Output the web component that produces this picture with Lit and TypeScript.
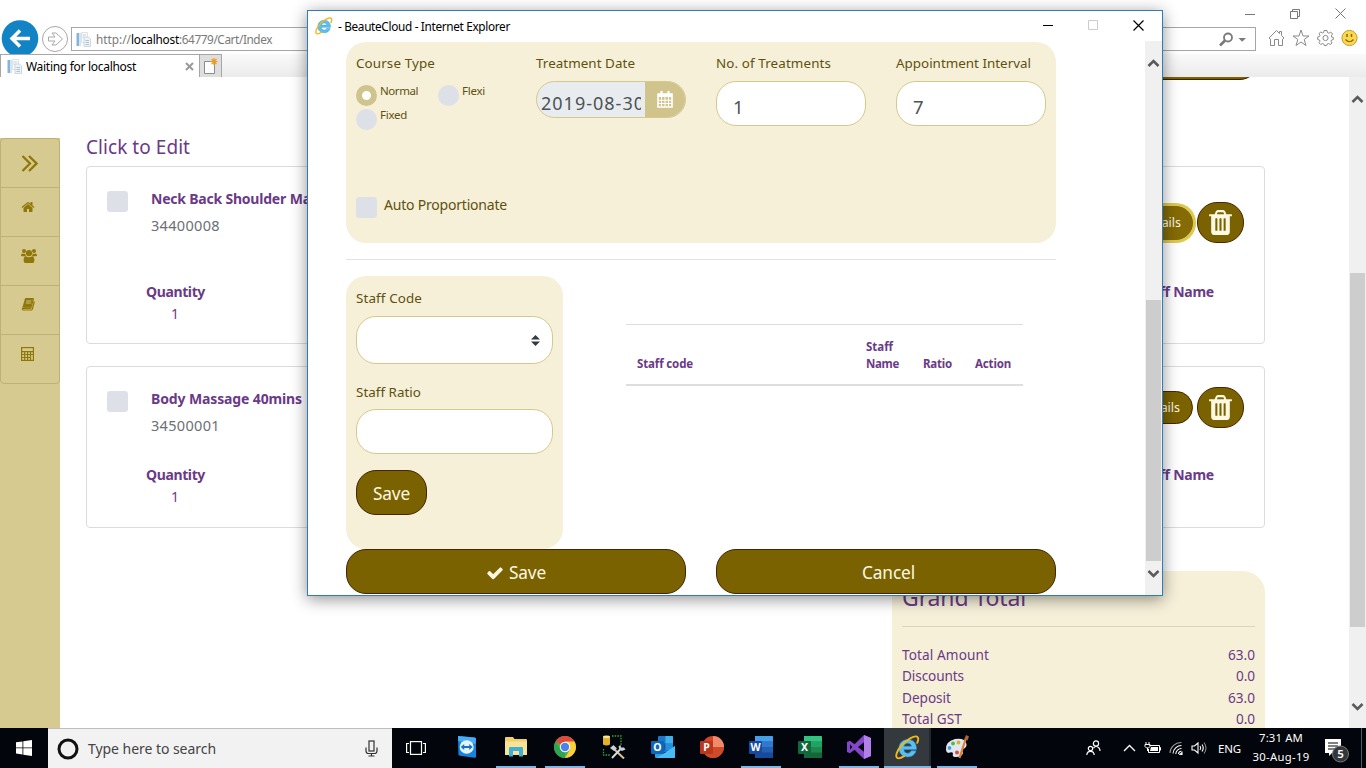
import { LitElement, html, css, svg } from "lit";
import { customElement, property } from "lit/decorators.js";
import { classMap } from "lit/directives/class-map.js";

/** A single line of text whose tracking is tuned so that it spans `w` pixels. */
@customElement("fit-text")
class FitText extends LitElement {
  @property({ type: Number }) w = 0;
  @property() text = "";
  static styles = css`
    :host { display: inline-block; white-space: pre; text-align: left; }
  `;
  updated() {
    const span = this.renderRoot.querySelector("span") as HTMLElement;
    span.style.letterSpacing = "0px";
    const natural = span.getBoundingClientRect().width;
    const gap = (this.w - natural) / Math.max(1, this.text.length);
    span.style.letterSpacing = `${gap.toFixed(3)}px`;
  }
  render() {
    return html`<span>${this.text}</span>`;
  }
}

const fit = (text: string, w: number) => html`<fit-text .text=${text} .w=${w}></fit-text>`;

const fa = (d: string, size: number) =>
  html`<svg width=${size} height=${size} viewBox="0 0 1792 1792" fill="currentColor"><path d=${d} /></svg>`;

const TRASH =
  "M704 1376v-704q0-14-9-23t-23-9h-64q-14 0-23 9t-9 23v704q0 14 9 23t23 9h64q14 0 23-9t9-23zm256 0v-704q0-14-9-23t-23-9h-64q-14 0-23 9t-9 23v704q0 14 9 23t23 9h64q14 0 23-9t9-23zm256 0v-704q0-14-9-23t-23-9h-64q-14 0-23 9t-9 23v704q0 14 9 23t23 9h64q14 0 23-9t9-23zm-544-992h448l-48-117q-7-9-17-11h-317q-10 2-17 11zm928 32v64q0 14-9 23t-23 9h-96v948q0 83-47 143.5t-113 60.5h-832q-66 0-113-58.5t-47-141.5v-952h-96q-14 0-23-9t-9-23v-64q0-14 9-23t23-9h309l70-167q15-37 54-63t79-26h320q40 0 79 26t54 63l70 167h309q14 0 23 9t9 23z";
const CHECK =
  "M1671 566q0 40-28 68l-724 724-136 136q-28 28-68 28t-68-28l-136-136-362-362q-28-28-28-68t28-68l136-136q28-28 68-28t68 28l294 295 656-657q28-28 68-28t68 28l136 136q28 28 28 68z";
const HOME =
  "M1472 992v480q0 26-19 45t-45 19h-384v-384h-256v384h-384q-26 0-45-19t-19-45v-480q0-1 .5-3t.5-3l575-474 575 474q1 2 1 6zm223-69l-62 74q-8 9-21 11h-3q-13 0-21-7l-692-577-692 577q-12 8-24 7-13-2-21-11l-62-74q-8-10-7-23.5t11-21.5l719-599q32-26 76-26t76 26l244 204v-195q0-14 9-23t23-9h192q14 0 23 9t9 23v408l219 182q10 8 11 21.5t-7 23.5z";

const ieLogo = (size: number) => html`
  <svg width=${size} height=${size} viewBox="0 0 24 24" fill="none">
    <path d="M20.2 15.2H15.6C15 16.7 13.8 17.4 12.2 17.4C10 17.4 8.6 16 8.5 13.8H20.6C21 8.3 17.6 4.3 12.4 4.3C7.4 4.3 3.8 7.9 3.8 12.7C3.8 17.6 7.3 21 12.3 21C16.300 21 19.2 18.900 20.200 15.200ZM8.600 10.800C8.900 9 10.300 7.900 12.200 7.900C14.200 7.900 15.600 9 15.800 10.800Z" fill="#5cc0ee" stroke="#2f90cf" stroke-width=".6"/>
    <path d="M21.300 7.500C22.700 4.500 22.700 2.300 21.100 1.600C18.300.4 11.500 4.300 6.500 9.800C1.900 14.900 0 20.200 2 21.900C3.300 23 5.800 22.200 8.700 20.300" stroke="#f0b81c" stroke-width="1.800" stroke-linecap="round"/>
  </svg>`;

const pageIcon = html`
  <svg width="15" height="15" viewBox="0 0 15 15">
    <path d="M.5 1H3V14H.5Z" fill="#86b3d8"/><path d="M3 1H5V14H3Z" fill="#d5e5f2"/>
    <path d="M5.500.5H11.500V10.500H5.500Z" fill="#f8fafc" stroke="#dde3e8"/>
    <path d="M6.500 3H10M6.500 5H8" stroke="#c5d3de"/>
    <path d="M8 5H12.500L14.500 7V14.500H8Z" fill="#eef3f8" stroke="#c3cfd9" stroke-width=".8"/>
    <path d="M9.500 8.500H13M9.500 10.500H13M9.500 12.500H13" stroke="#a9bccb" stroke-width=".9"/>
  </svg>`;

const chevron = (up: boolean) => html`
  <svg width="13" height="10" viewBox="0 0 13 10">
    <path d=${up ? "M1.500 8L6.500 3L11.500 8" : "M1.500 2L6.500 7L11.500 2"} fill="none" stroke="#5a5a5a" stroke-width="2.600"/>
  </svg>`;

const sideIcons = [
  html`<svg width="17" height="17" viewBox="0 0 17 17" fill="none" stroke="currentColor" stroke-width="2.300"><path d="M1.500 1L9 8.500L1.500 16M8 1L15.500 8.500L8 16"/></svg>`,
  fa(HOME, 14),
  html`<svg width="16" height="14" viewBox="0 0 16 14" fill="currentColor">
    <circle cx="3" cy="2.100" r="2"/><circle cx="13" cy="2.100" r="2"/><circle cx="8" cy="4.200" r="3.100"/>
    <path d="M0 6.500Q0 4.600 1.500 4.500Q3 5.200 4.300 4.600Q4.300 6.500 5.300 7.200H1.500Q0 7.300 0 6.500ZM16 6.500Q16 4.600 14.500 4.500Q13 5.200 11.700 4.600Q11.700 6.500 10.700 7.200H14.500Q16 7.300 16 6.500Z"/>
    <path d="M2.600 11.500Q2.600 7.500 4.900 7.300Q8 9.400 11.100 7.300Q13.400 7.500 13.400 11.500Q13.400 14 11.500 14H4.500Q2.600 14 2.600 11.500Z"/></svg>`,
  html`<svg width="14" height="13" viewBox="0 0 14 13"><path d="M4.300.5H11.800Q12.600.6 12.300 1.500L10 9.500Q9.700 10.300 8.800 10.300H2.300Q1 10.400 1.500 11.400Q1.700 12 2.500 12H10Q10.900 12 11.200 11.200L13.400 3.500" fill="none" stroke="currentColor" stroke-width="1.200"/><path d="M4 .5H12L9.500 9.700H1.300Z" fill="currentColor"/><path d="M5.300 3H10.300M4.800 5H9.800" stroke="#d6ca91" stroke-width=".9"/></svg>`,
  html`<svg width="13" height="14" viewBox="0 0 13 14"><rect x=".6" y=".6" width="11.800" height="12.800" fill="none" stroke="currentColor" stroke-width="1.200"/><path d="M0 4.600H13M1 7.500H12M1 10.500H9M3.700 4.600V13M6.600 4.600V13M9.500 4.600V13" stroke="currentColor" stroke-width="1.200"/></svg>`,
];

const office = (letter: string, dark: string, mid: string, light: string, pale: string, round = false) => html`
  <svg width="24" height="24" viewBox="0 0 24 24">
    ${round
      ? svg`<circle cx="13" cy="12" r="11" fill=${mid}/><path d="M13 1A11 11 0 0 1 24 12H13Z" fill=${pale}/><path d="M24 12A11 11 0 0 1 2 12Z" fill=${light}/>`
      : svg`<rect x="6" y="1" width="18" height="22" rx="1.200" fill=${mid}/><path d="M6 1H23Q24 1 24 2V6.500H6Z" fill=${pale}/><path d="M6 6.500H24V12H6Z" fill=${light}/><path d="M6 17.500H24V22Q24 23 23 23H6Z" fill=${dark}/>`}
    <rect x="0" y="6" width="13" height="13" rx="1" fill=${dark}/>
    <text x="6.500" y="16.300" text-anchor="middle" font-family="Noto Sans, sans-serif" font-weight="700" font-size="10.500" fill="#fff">${letter}</text>
  </svg>`;

type Task = { icon: unknown; open?: boolean; active?: boolean };
const tasks: Task[] = [
  { icon: html`<svg width="20" height="24" viewBox="0 0 20 24"><path d="M1 1L17.500 2.500Q19 2.700 19 4V21.500Q19 23 17.500 22.800L3 20.800Q1.500 20.500 1.400 19Z" fill="#1583e0"/><path d="M1 1L17.500 2.500Q19 2.700 19 4L18.500 9L1.200 6Z" fill="#48adf5"/><ellipse cx="9.700" cy="12" rx="7" ry="6.800" fill="#e8f4fd"/><path d="M3.700 12L7.200 8.900V11H12.200V8.900L15.700 12L12.200 15.100V13H7.200V15.100Z" fill="#1272c9"/></svg>` },
  { icon: html`<svg width="22" height="20" viewBox="0 0 22 20"><path d="M0 1Q0 0 1 0H8L9.500 2H21Q22 2 22 3V18H0Z" fill="#f2cf6d"/><path d="M0 4.500H22V18H0Z" fill="#fbe395"/><path d="M4 11Q4 10 5 10H17Q18 10 18 11V19.500H14V14H8V19.500H4Z" fill="#3fb0d3"/></svg>`, open: true },
  { icon: html`<svg width="22" height="22" viewBox="0 0 22 22"><circle cx="11" cy="11" r="11" fill="#4caf50"/><path d="M11 11L1.500 5.500A11 11 0 0 1 20.500 5.500Z" fill="#dd4b3e"/><path d="M11 5.500H20.500A11 11 0 0 1 11 22L15.800 13.800Z" fill="#fdd037"/><path d="M1.500 5.500L6.200 13.700L11 16L10.500 22A11 11 0 0 1 1.500 5.500Z" fill="#2fa254"/><circle cx="11" cy="11" r="5.200" fill="#fff"/><circle cx="11" cy="11" r="4.200" fill="#4a83ec"/></svg>`, open: true },
  { icon: html`<svg width="24" height="24" viewBox="0 0 24 24"><path d="M1 1.500V9.500Q4.500 11.500 8 9.500V1.500Z" fill="#e2b227"/><ellipse cx="4.500" cy="1.700" rx="3.500" ry="1.300" fill="#fae890"/><path d="M10 1H19V10M1.500 14V20H9" fill="none" stroke="#36a63c" stroke-width="1.300" stroke-dasharray="1.500 1.200"/><path d="M12.500 14.500L22 23.500" stroke="#d9c58e" stroke-width="2"/><path d="M18.500 14L10 23" stroke="#d8dde2" stroke-width="1.900"/><path d="M8 13L11.500 10L15 13.500L12 16ZM16.500 11.500L18.500 10L19 12.500L22 12.500L23.500 14.500L20 16L17.500 14.500Z" fill="#c8d0d8"/></svg>` },
  { icon: html`<svg width="24" height="24" viewBox="0 0 24 24"><rect x="7" y="1" width="15" height="16" rx="1" fill="#1a76c9"/><path d="M14.500 1H21Q22 1 22 2V8.500H14.500Z" fill="#41b1ee"/><path d="M7 8.500H14.500V15H7Z" fill="#0f5ba5"/><path d="M14.500 8.500H22V15H14.500Z" fill="#2490dc"/><path d="M4 12L14 18L24 11V22Q24 23 23 23H5Q4 23 4 22Z" fill="#2aa0e6"/><path d="M24 11L13 18.500L5 23H23Q24 23 24 22Z" fill="#48bdf3"/><rect y="6" width="13" height="13" rx="1" fill="#0e66b7"/><text x="6.500" y="16.300" text-anchor="middle" font-family="Noto Sans, sans-serif" font-weight="700" font-size="10.500" fill="#fff">O</text></svg>` },
  { icon: office("P", "#b9371c", "#d24625", "#cf4a29", "#f18a6a", true) },
  { icon: office("W", "#184a9c", "#2160b4", "#2f7ad0", "#44a0e8"), open: true },
  { icon: office("X", "#12683a", "#1c8a4e", "#21a366", "#32c380") },
  { icon: html`<svg width="24" height="24" viewBox="0 0 24 24"><path fill-rule="evenodd" d="M17 0L7.500 9.300L3 5.800L0 7V17L3 18.200L7.500 14.700L17 24L24 21V3ZM3 9.300L5.300 12L3 14.700ZM17 7.200V16.800L11 12Z" fill="#8447cb"/><path d="M17 0L24 3V21L17 24Z" fill="#b37fe8"/></svg>`, open: true },
  { icon: ieLogo(25), open: true, active: true },
  { icon: html`<svg width="24" height="24" viewBox="0 0 24 24"><path d="M1 15Q0 6.500 10 4Q20 2.500 21.500 9Q22 12.500 18 14Q16.500 15.500 18 18Q17 22.500 9.500 22Q7 21.500 8 18.500Q7.500 16.500 5 17.500Q1.500 19 1 15Z" fill="#dfe8f0"/><circle cx="4.500" cy="13" r="1.900" fill="#4a9ae2"/><circle cx="8" cy="8.500" r="1.900" fill="#53b949"/><circle cx="13.500" cy="7.500" r="1.900" fill="#e6a92b"/><circle cx="12" cy="17.500" r="2" fill="#d94d3f"/><path d="M21 3L14.500 23" stroke="#d98234" stroke-width="2.200"/><path d="M19.500 4L21 0L24 1.500L22.500 5.500Z" fill="#a9663a"/></svg>`, open: true },
];

@customElement("scroll-bar")
class ScrollBar extends LitElement {
  @property({ type: Number }) start = 0;
  @property({ type: Number }) size = 0;
  static styles = css`
    :host { display: flex; flex-direction: column; width: 17px; flex: none; background: #f0f0f0; align-items: center; box-sizing: border-box; }
    .arrow { height: 17px; display: flex; align-items: center; }
    .thumb { width: 15px; background: #cdcdcd; flex: none; }
    .up { padding-top: 13px; }
    .spring { flex: 1; }
    .down { padding-bottom: 13px; }
  `;
  render() {
    return html`
      <div class="arrow up">${chevron(true)}</div>
      <div style="height:${this.start - 30}px"></div>
      <div class="thumb" style="height:${this.size}px"></div>
      <div class="spring"></div>
      <div class="arrow down">${chevron(false)}</div>`;
  }
}

@customElement("app-root")
class AppRoot extends LitElement {
  static styles = css`
    :host { display: flex; flex-direction: column; position: relative; width: 1366px; height: 768px; overflow: hidden; background: #fff; font-family: "Noto Sans", "Open Sans", sans-serif; font-size: 13.600px; color: #6a3a87; }
    * { box-sizing: border-box; }
    svg { display: block; flex: none; }

    .titlebar { height: 27px; display: flex; justify-content: flex-end; align-items: center; padding-right: 20px; gap: 35px; color: #777; }
    .navbar { height: 27px; display: flex; align-items: flex-start; overflow: visible; }
    .navbtns { width: 71px; height: 27px; }
    .navbtns svg { margin-top: -8px; }
    .address { width: 1185px; height: 24px; border: 1px solid #a6a6a6; display: flex; align-items: center; padding: 0 8px 0 4px; color: #7a7a7a; font-size: 11.800px; }
    .address .url { margin-left: 5px; flex: 1; display: flex; }
    .host { color: #000; }
    .cmds { display: flex; gap: 7px; margin-left: 12px; padding-top: 2px; }
    .tabs { height: 23px; display: flex; background: linear-gradient(#fafafa, #ebebeb); }
    .tab { width: 200px; border: 1px solid #a6a6a6; border-bottom: 0; background: #fff; display: flex; align-items: center; padding: 0 5px 0 6px; color: #000; font-size: 12px; }
    .tab .name { flex: 1; margin-left: 4px; }
    .newtab { width: 22px; border: 1px solid #a6a6a6; border-bottom: 0; border-left: 0; background: #dedede; display: flex; align-items: center; justify-content: center; }

    .page { height: 651px; display: flex; overflow: hidden; }
    .rail { width: 60px; flex: none; margin-top: 61px; height: 590px; background: #d6ca91; }
    .rail ul { list-style: none; margin: 0; padding: 0; border: 1px solid #bdb078; border-radius: 4px; height: 246px; color: #8f780a; }
    .rail li { height: 49px; padding-left: 20px; padding-top: 12px; border-bottom: 1px solid #bdb078; }
    .rail li:first-child { padding-top: 16px; }
    .rail li:last-child { border: 0; }
    .body { width: 1179px; margin-left: 26px; margin-right: 84px; display: flex; flex-direction: column; flex: none; }
    .stub { align-self: flex-end; margin-right: 7px; width: 125px; height: 30px; margin-top: -27px; border: 1px solid #3f2000; border-radius: 0 0 18px 18px; background: #7a6200; flex: none; }
    .heading { height: 30px; line-height: 30px; margin-top: 50px; font-size: 19px; margin-bottom: 6px; padding-top: 2px; }
    .card { border: 1px solid #dcdcdc; border-radius: 4px; display: flex; justify-content: space-between; flex: none; margin-bottom: 22px; }
    .tall { height: 178px; }
    .short { height: 162px; }
    .item { display: grid; grid-template-columns: 44px 220px; padding: 19px 0 0 20px; align-content: start; line-height: 26px; font-size: 14px; }
    .box { width: 21px; height: 21px; border-radius: 3px; background: #dde1e7; margin-top: 5px; }
    .bold { font-weight: 700; }
    .code { color: #6c6f73; font-size: 14.500px; }
    .qty { grid-column: 1 / 3; width: 58px; margin-left: 39px; text-align: center; line-height: 22px; margin-top: 43px; }
    .short .qty { margin-top: 26px; }
    .side { width: 140px; display: flex; flex-direction: column; align-items: flex-end; font-size: 14px; }
    .acts { display: flex; align-items: center; gap: 4px; margin: 35px 20px 0 0; }
    .short .acts { margin-top: 20px; }
    .details { width: 76px; height: 33px; border-radius: 17px; background: #7a6200; border: 1px solid #4a2500; color: #fdf8e2; display: flex; align-items: center; justify-content: flex-end; padding-right: 12px; font-size: 12.500px; }
    .tall .details { box-shadow: 0 0 0 3px #dcc950; background: #846b05; border-color: #846b05; height: 34px; width: 76px; margin-right: 0; padding-right: 11px; }
    .trash { width: 47px; height: 41px; border-radius: 20px; background: #7a6200; border: 1px solid #4a2500; color: #fdf8e2; display: flex; align-items: center; justify-content: center; }
    .staff { margin: 38px 50px 0 0; line-height: 22px; }
    .short .staff { margin-top: 36px; }
    .total { align-self: flex-end; width: 373px; height: 200px; margin-top: 21px; border-radius: 22px; background: #f6f0d9; padding: 9px 10px; flex: none; }
    .total h2 { margin: 0; font-weight: 400; font-size: 23px; line-height: 34px; height: 47px; border-bottom: 1px solid #dbd5bd; margin-bottom: 17px; }
    .line { display: flex; justify-content: space-between; line-height: 21.400px; }

    .popup { position: absolute; left: 307px; top: 10px; width: 856px; height: 586px; background: #fff; border: 1px solid #2f7cba; box-shadow: 0 3px 15px rgba(0, 0, 0, .44); display: flex; flex-direction: column; color: #5f5010; }
    .ptitle { height: 30px; display: flex; align-items: center; padding: 0 18px 1px 7px; color: #000; font-size: 11.800px; flex: none; }
    .ptitle .name { flex: 1; margin-left: 5px; }
    .wbtns { display: flex; gap: 35px; }
    .pbody { flex: 1; display: flex; justify-content: space-between; }
    .form { width: 710px; margin-left: 38px; padding-top: 1px; display: flex; flex-direction: column; }
    .panel { background: #f6f0d9; border-radius: 20px; padding: 11px 10px 0; }
    .course { height: 201px; }
    .cols { display: grid; grid-template-columns: repeat(4, 150px); column-gap: 30px; height: 144px; align-content: start; }
    .label { line-height: 20px; height: 28px; font-size: 13.400px; }
    .radios { display: grid; grid-template-columns: 82px 60px; grid-auto-rows: 24px; padding-top: 4px; font-size: 11.500px; }
    .radio { display: flex; gap: 3px; line-height: 11px; }
    .dot { width: 21px; height: 21px; border-radius: 50%; background: #dde0e7; flex: none; }
    .dot.on { background: #fff; border: 6.500px solid #cfc48d; }
    .date { display: flex; height: 37px; border: 1px solid #d3c98f; border-radius: 19px; overflow: hidden; background: #e9ecef; }
    .date .val { width: 104px; margin-left: 4px; overflow: hidden; font-size: 18px; line-height: 42px; color: #4d5257; }
    .date .cal { flex: 1; background: #d0c48c; display: flex; align-items: center; justify-content: center; color: #fff; }
    .date .clip { width: 100px; overflow: hidden; }
    .input { height: 45px; border: 1px solid #d3c98f; border-radius: 20px; background: #fff; padding: 0 16px; line-height: 49px; font-size: 18.500px; color: #4d5257; }
    .auto { display: flex; gap: 7px; line-height: 15px; font-size: 14px; }
    .auto .box { margin: 0; }
    .rule { height: 1px; background: #e2e2e2; margin: 16px 0; flex: none; }
    .lower { display: flex; }
    .entry { width: 217px; height: 273px; padding-top: 12px; }
    .select { height: 48px; border: 1px solid #d3c98f; border-radius: 20px; background: #fff; display: flex; align-items: center; justify-content: flex-end; padding-right: 12px; margin-bottom: 18px; }
    .entry .label { height: 27px; }
    .entry .label:first-child { height: 28px; }
    .btn { height: 45px; border: 1px solid #452400; border-radius: 20px; background: #7a6200; color: #fdf8e2; font-size: 17.300px; display: flex; align-items: center; justify-content: center; gap: 5px; padding-top: 2px; }
    .small { width: 71px; margin-top: 16px; }
    .tbl { width: 397px; height: 62px; margin: 48px 0 0 63px; border-top: 1px solid #dedede; border-bottom: 2px solid #dedede; display: grid; grid-template-columns: 229px 57px 52px 48px; padding: 13px 0 0 11px; align-items: end; align-content: start; color: #6a3a87; font-weight: 700; font-size: 11.500px; line-height: 17px; }
    .foot { display: grid; grid-template-columns: 340px 340px; gap: 30px; }
    .cancel { padding-left: 5px; }

    .taskbar { height: 40px; background: #02050b; display: flex; color: #fff; flex: none; }
    .start { width: 48px; display: flex; align-items: center; justify-content: center; }
    .search { width: 344px; background: #f2f2f2; border-top: 1px solid #bdbdbd; display: flex; align-items: center; padding: 0 14px 0 9px; color: #444; font-size: 14px; }
    .search .ph { flex: 1; margin-left: 9px; }
    .slot { width: 48px; margin-right: 1px; display: flex; align-items: center; justify-content: center; height: 40px; }
    .apps { display: flex; margin-left: 1px; }
    .app { width: 49px; height: 40px; display: grid; grid-template-rows: 38px 2px; justify-items: center; align-items: center; padding-top: 0; }
    .app .bar { width: 40px; height: 2px; }
    .app.open .bar { background: #76b9ed; }
    .app.active { background: linear-gradient(90deg, transparent 1px, #34393e 1px, #34393e 46px, #24282d 46px, #24282d 48px, transparent 48px); }
    .app.active .bar { width: 47px; }
    .tray { margin-left: auto; display: flex; align-items: center; font-size: 11.500px; }
    .tray svg { margin-right: 8px; }
    .tray .people { margin-right: 22px; }
    .tray .volume { margin-right: 10px; }
    .clock { text-align: center; line-height: 18.500px; width: 70px; display: flex; flex-direction: column; align-items: center; margin-left: 5px; font-size: 11.300px; padding-bottom: 1px; }
    .tray .notif { margin: 3px 11px 0 8px; }
    .edge { width: 5px; height: 40px; border-left: 1px solid #555a60; }
  `;

  private item(title: unknown, code: string, size: string) {
    return html`
      <section class="card ${size}">
        <div class="item">
          <div class="box"></div>
          <div class="bold">${title}</div>
          <div></div>
          <div class="code">${fit(code, 69)}</div>
          <div class="qty"><div class="bold">${fit("Quantity", 59)}</div><div>1</div></div>
        </div>
        <div class="side">
          <div class="acts">
            <div class="details">${fit("Details", 40)}</div>
            <div class="trash">${fa(TRASH, 29)}</div>
          </div>
          <div class="staff bold">${fit("Staff Name", 76)}</div>
        </div>
      </section>`;
  }

  private browser() {
    const lines: [string, number, string, number][] = [
      ["Total Amount", 87, "63.0", 27],
      ["Discounts", 62, "0.0", 19],
      ["Deposit", 49, "63.0", 27],
      ["Total GST", 60, "0.0", 19],
    ];
    return html`
      <div class="titlebar">
        <svg width="10" height="10" viewBox="0 0 10 10"><path d="M0 5.500H10" stroke="#777"/></svg>
        <svg width="10" height="10" viewBox="0 0 10 10" fill="none" stroke="#777"><path d="M.5 2.500H7.500V9.500H.5ZM2.500 2.500V.5H9.500V7.500H7.500"/></svg>
        <svg width="11" height="11" viewBox="0 0 11 11"><path d="M.5.5L10.500 10.500M10.500.5L.5 10.500" stroke="#777"/></svg>
      </div>
      <div class="navbar">
        <div class="navbtns">
          <svg width="71" height="35" viewBox="0 0 71 35">
            <circle cx="20" cy="19.500" r="18.300" fill="#1283c4"/>
            <path d="M30 19.500H12M20 11.500L12 19.500L20 27.500" fill="none" stroke="#fff" stroke-width="3.500"/>
            <circle cx="55" cy="20" r="12.500" fill="#fff" stroke="#a8a8a8"/>
            <path d="M48.500 18H55L52 14H56L62.500 20L56 26H52L55 22H48.500Z" fill="#fff" stroke="#a8a8a8"/>
          </svg>
        </div>
        <div class="address">
          ${pageIcon}
          <div class="url">${fit("http://", 35)}<span class="host">${fit("localhost", 48)}</span>${fit(":64779/Cart/Index", 93)}</div>
          <svg width="28" height="15" viewBox="0 0 28 15" fill="none"><circle cx="9" cy="5.500" r="4" stroke="#7a7a7a" stroke-width="1.800"/><path d="M6 8.500L1 13.500" stroke="#7a7a7a" stroke-width="2.600"/><path d="M19.500 6H27L23.200 9.800Z" fill="#7a7a7a"/></svg>
        </div>
        <div class="cmds">
          <svg width="17" height="18" viewBox="0 0 17 18" fill="none" stroke="#8a8a8a"><path d="M1 9L8.500 1.500L11.500 4.500V2.500H13.500V6.500L16 9L14.500 10.200V16.500H10.500V10.500H6.500V16.500H2.500V10.200Z"/></svg>
          <svg width="18" height="18" viewBox="0 0 18 18" fill="none" stroke="#8a8a8a"><path d="M9 1L11 7H17L12.200 10.500L14 16.500L9 13L4 16.500L5.800 10.500L1 7H7Z"/></svg>
          <svg width="17" height="18" viewBox="0 0 17 18" fill="none" stroke="#8a8a8a"><circle cx="8.500" cy="9" r="2.600"/><path d="M7 1.500H10L10.500 3.700L12 4.300L13.700 3L15.500 5L14.300 6.800L14.800 8.200L16.300 8.500V10.500L14.500 11L14 12.200L15 14L13.300 15.500L11.500 14.500L10.200 15L9.700 16.500H7.300L6.800 15L5.500 14.500L3.700 15.500L2 13.800L3 12.200L2.500 11L.7 10.500V8L2.400 7.500L3 6.300L2 4.500L3.800 3L5.500 4L6.600 3.600Z"/></svg>
          <svg width="17" height="18" viewBox="0 0 17 18"><circle cx="8.500" cy="9" r="7.600" fill="#fbd94b" stroke="#c29a3e"/><path d="M6 5V8M10.500 5V8" stroke="#8b6420" stroke-width="1.500"/><path d="M4.500 10.500Q8.500 15 12.500 10.500" fill="none" stroke="#8b6420" stroke-width="1.200"/></svg>
        </div>
      </div>
      <div class="tabs">
        <div class="tab">
          ${pageIcon}<span class="name">${fit("Waiting for localhost", 110)}</span>
          <svg width="9" height="9" viewBox="0 0 9 9"><path d="M1 1L8 8M8 1L1 8" stroke="#9a9a9a" stroke-width="2"/></svg>
        </div>
        <div class="newtab"><svg width="15" height="16" viewBox="0 0 15 16"><path d="M1.500 3.500H11.500V15.500H1.500Z" fill="#fdfdfd" stroke="#8c8c8c"/><path d="M11 0V7M7.500 3.500H14.500M8.500 1L13.500 6M13.500 1L8.500 6" stroke="#f09a1c" stroke-width="1.200"/></svg></div>
      </div>
      <div class="page">
        <nav class="rail"><ul>${sideIcons.map((i) => html`<li>${i}</li>`)}</ul></nav>
        <div class="body">
          <div class="stub"></div>
          <div class="heading">${fit("Click to Edit", 104)}</div>
          ${this.item(html`${fit("Neck Back Shoulder", 135)} Ma`, "34400008", "tall")}
          ${this.item(fit("Body Massage 40mins", 151), "34500001", "short")}
          <section class="total">
            <h2>${fit("Grand Total", 124)}</h2>
            ${lines.map(([l, lw, v, vw]) => html`<div class="line">${fit(l, lw)}${fit(v, vw)}</div>`)}
          </section>
        </div>
        <scroll-bar .start=${196} .size=${354}></scroll-bar>
      </div>`;
  }

  private popup() {
    const radios: [string, number, boolean][] = [["Normal", 38, true], ["Flexi", 23, false], ["Fixed", 27, false]];
    return html`
      <div class="popup">
        <div class="ptitle">
          ${ieLogo(18)}<span class="name">${fit("- BeauteCloud - Internet Explorer", 172)}</span>
          <div class="wbtns">
            <svg width="10" height="11" viewBox="0 0 10 11"><path d="M0 5.500H10" stroke="#000"/></svg>
            <svg width="10" height="11" viewBox="0 0 10 11"><path d="M.5.5H9.500V9.500H.5Z" fill="none" stroke="#ccc"/></svg>
            <svg width="11" height="11" viewBox="0 0 11 11"><path d="M.5.5L10.500 10.500M10.500.5L.5 10.500" stroke="#000" stroke-width="1.200"/></svg>
          </div>
        </div>
        <div class="pbody">
          <div class="form">
            <div class="panel course">
              <div class="cols">
                <div>
                  <div class="label">${fit("Course Type", 79)}</div>
                  <div class="radios">
                    ${radios.map(([t, w, on]) => html`<div class="radio"><span class=${classMap({ dot: true, on })}></span>${fit(t, w)}</div>`)}
                  </div>
                </div>
                <div>
                  <div class="label">${fit("Treatment Date", 99)}</div>
                  <div class="date">
                    <div class="val"><div class="clip">${fit("2019-08-30", 104)}</div></div>
                    <div class="cal"><svg width="16" height="17" viewBox="0 0 16 17"><path d="M1 3H15V16H1Z" fill="none" stroke="#fff" stroke-width="1.600"/><path d="M1 3H15V6H1Z" fill="#fff"/><path d="M4.500 0V4M11.500 0V4" stroke="#fff" stroke-width="2.200"/><path d="M4.500 6V16M8 6V16M11.500 6V16M1 9.300H15M1 12.500H15" stroke="#fff" stroke-width="1"/></svg></div>
                  </div>
                </div>
                <div><div class="label">${fit("No. of Treatments", 115)}</div><div class="input">1</div></div>
                <div><div class="label">${fit("Appointment Interval", 135)}</div><div class="input">7</div></div>
              </div>
              <div class="auto"><div class="box"></div>${fit("Auto Proportionate", 123)}</div>
            </div>
            <div class="rule"></div>
            <div class="lower">
              <div class="panel entry">
                <div class="label">${fit("Staff Code", 66)}</div>
                <div class="select"><svg width="9" height="11" viewBox="0 0 9 11" fill="#343a40"><path d="M0 4.500L4.500 0L9 4.500ZM0 6.500H9L4.500 11Z"/></svg></div>
                <div class="label">${fit("Staff Ratio", 65)}</div>
                <div class="input"></div>
                <div class="btn small">${fit("Save", 37)}</div>
              </div>
              <div class="tbl">
                <span>${fit("Staff code", 56)}</span>
                <span>${fit("Staff", 27)}<br>${fit("Name", 33)}</span>
                <span>${fit("Ratio", 29)}</span>
                <span>${fit("Action", 36)}</span>
              </div>
            </div>
            <div class="foot">
              <div class="btn">${fa(CHECK, 18)}${fit("Save", 37)}</div>
              <div class="btn cancel">${fit("Cancel", 53)}</div>
            </div>
          </div>
          <scroll-bar .start=${259} .size=${261}></scroll-bar>
        </div>
      </div>`;
  }

  private taskbar() {
    return html`
      <div class="taskbar">
        <div class="start"><svg width="16" height="16" viewBox="0 0 16 16" fill="#fff"><path d="M0 2.300L6.500 1.400V7.500H0ZM7.300 1.300L16 0V7.500H7.300ZM0 8.300H6.500V14.500L0 13.600ZM7.300 8.300H16V16L7.300 14.700Z"/></svg></div>
        <div class="search">
          <svg width="22" height="22" viewBox="0 0 22 22"><circle cx="11" cy="11" r="9" fill="none" stroke="#111" stroke-width="3"/></svg>
          <span class="ph">${fit("Type here to search", 128)}</span>
          <svg width="13" height="17" viewBox="0 0 13 17" fill="none" stroke="#333" stroke-width="1.200"><rect x="4" y="1" width="5" height="10"/><path d="M1 7.500V11Q1 13.500 3.500 13.500H9.500Q12 13.500 12 11V7.500M6.500 13.500V16M3.500 16H9.500"/></svg>
        </div>
        <div class="slot"><svg width="20" height="14" viewBox="0 0 20 14" fill="none" stroke="#fff" stroke-width="1.200"><rect x="4.500" y=".6" width="11" height="12.800"/><path d="M3 2.500H.6V11.500H3M17 2.500H19.400V11.500H17"/></svg></div>
        <div class="apps">
          ${tasks.map((t) => html`<div class=${classMap({ app: true, open: !!t.open, active: !!t.active })}>${t.icon}<div class="bar"></div></div>`)}
        </div>
        <div class="tray">
          <svg class="people" width="15" height="16" viewBox="0 0 15 16" fill="none" stroke="#fff" stroke-width="1.200"><circle cx="10" cy="3.500" r="2.600"/><path d="M7.500 8Q10 5 13 8Q14 9 14 11"/><circle cx="4.500" cy="8.500" r="2.200"/><path d="M.8 15Q1 11.300 4.500 11.300Q8 11.300 8.200 15"/></svg>
          <svg width="13" height="8" viewBox="0 0 13 8" fill="none" stroke="#fff" stroke-width="1.300"><path d="M1 7L6.500 1.500L12 7"/></svg>
          <svg width="17" height="12" viewBox="0 0 17 12" fill="none" stroke="#fff"><path d="M5.500 3.500H15.500V10.500H4.500V7M15.500 5.500H16.500V8.500"/><path d="M7 5H14V9H6Z" fill="#fff" stroke="none"/><path d="M2 0V2M5 0V2M1 2.500H6V4.500L4.500 6H2.500L1 4.500ZM3.500 6V9"/></svg>
          <svg width="14" height="14" viewBox="0 0 14 14" fill="none" stroke="#fff" stroke-width="1.100"><path d="M1 12A11 11 0 0 1 12.500 1.500" stroke="#999"/><path d="M4 12.500A8.500 8.500 0 0 1 12.500 4.500M6.800 13A5.500 5.500 0 0 1 12.500 7.500M9.500 13A3 3 0 0 1 12.500 10.300"/><path d="M11 13.500L13 11.500V13.500Z" fill="#fff"/></svg>
          <svg class="volume" width="17" height="14" viewBox="0 0 17 14" fill="none" stroke="#fff" stroke-width="1.100"><path d="M1 5H3.500L7 2V12L3.500 9H1Z"/><path d="M9 5Q10.500 7 9 9M11 3.500Q13.500 7 11 10.500"/><path d="M13 1.500Q17 7 13 12.500" stroke="#888"/></svg>
          ${fit("ENG", 23)}
          <div class="clock">${fit("7:31 AM", 44)}${fit("30-Aug-19", 57)}</div>
          <svg class="notif" width="26" height="26" viewBox="0 0 26 26">
            <path d="M1 2H17V16H8L5 19V16H1Z" fill="#fff"/><path d="M4 6H14M4 9H14M4 12H11" stroke="#02050b" stroke-width="1.200"/>
            <circle cx="16.500" cy="17" r="8" fill="#33363a" stroke="#777"/>
            <text x="16.500" y="21.200" text-anchor="middle" font-family="Noto Sans, sans-serif" font-weight="600" font-size="11.500" fill="#fff">5</text>
          </svg>
          <div class="edge"></div>
        </div>
      </div>`;
  }

  render() {
    return html`${this.browser()}${this.taskbar()}${this.popup()}`;
  }
}
